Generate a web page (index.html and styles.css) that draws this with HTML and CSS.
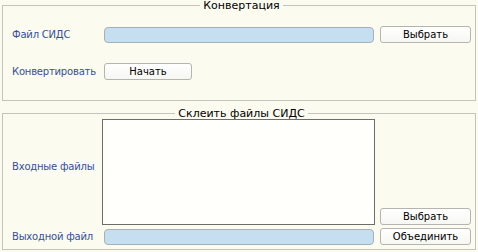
FILE: index.html
```html
<!DOCTYPE html>
<html lang="ru">
<head>
<meta charset="utf-8">
<link rel="stylesheet" href="styles.css">
</head>
<body>
<div class="page">
  <fieldset class="group group-convert">
    <legend class="group-title">Конвертация</legend>
    <div class="grid">
      <label class="lbl">Файл СИДС</label>
      <div class="field"></div>
      <button class="btn">Выбрать</button>
      <label class="lbl">Конвертировать</label>
      <button class="btn btn-start">Начать</button>
    </div>
  </fieldset>
  <fieldset class="group group-merge">
    <legend class="group-title">Склеить файлы СИДС</legend>
    <div class="grid grid-merge">
      <label class="lbl lbl-inputs">Входные файлы</label>
      <div class="listbox"></div>
      <button class="btn btn-bottom">Выбрать</button>
      <label class="lbl">Выходной файл</label>
      <div class="field"></div>
      <button class="btn">Объединить</button>
    </div>
  </fieldset>
</div>
</body>
</html>
```
FILE: styles.css
```css
html, body {
  margin: 0;
  padding: 0;
  background: #fbfbf0;
}
body {
  font-family: "DejaVu Sans", "Liberation Sans", sans-serif;
  font-size: 10px;
  color: #111;
}
.page {
  padding: 0 2px 0 2px;
}
.group {
  margin: 0;
  border: 1px solid #c4c4bc;
  padding: 0 4px 0 9px;
  min-width: 0;
}
.group-title {
  margin: 0 auto;
  padding: 0 3px;
  font-size: 11px;
  line-height: 11px;
  color: #000;
}
.group-convert {
  padding-top: 15px;
  padding-bottom: 20px;
}
.group-merge {
  margin-top: 7px;
  padding-top: 0;
  padding-bottom: 4px;
}
.grid {
  display: grid;
  grid-template-columns: 86px 1fr 91px;
  column-gap: 6px;
  row-gap: 20px;
  align-items: center;
}
.grid-merge {
  row-gap: 3px;
}
.lbl {
  color: #34509a;
  white-space: nowrap;
  letter-spacing: -0.2px;
}
.field {
  height: 14px;
  background: #c6dff0;
  border: 1px solid #a6b0b8;
  border-radius: 4px;
}
.btn {
  height: 17px;
  margin: 0;
  padding: 0;
  font: inherit;
  font-size: 10px;
  color: #000;
  background: linear-gradient(#ffffff, #f6f6f2);
  border: 1px solid #b4b4b0;
  border-radius: 3px;
}
.btn-start {
  grid-column: 2;
  justify-self: start;
  width: 88px;
}
.listbox {
  height: 104px;
  margin-left: -2px;
  margin-right: -1px;
  background: #fffffb;
  border: 1px solid #6e6e68;
}
.lbl-inputs {
  align-self: start;
  margin-top: 42px;
}
.btn-bottom {
  align-self: end;
}
```
